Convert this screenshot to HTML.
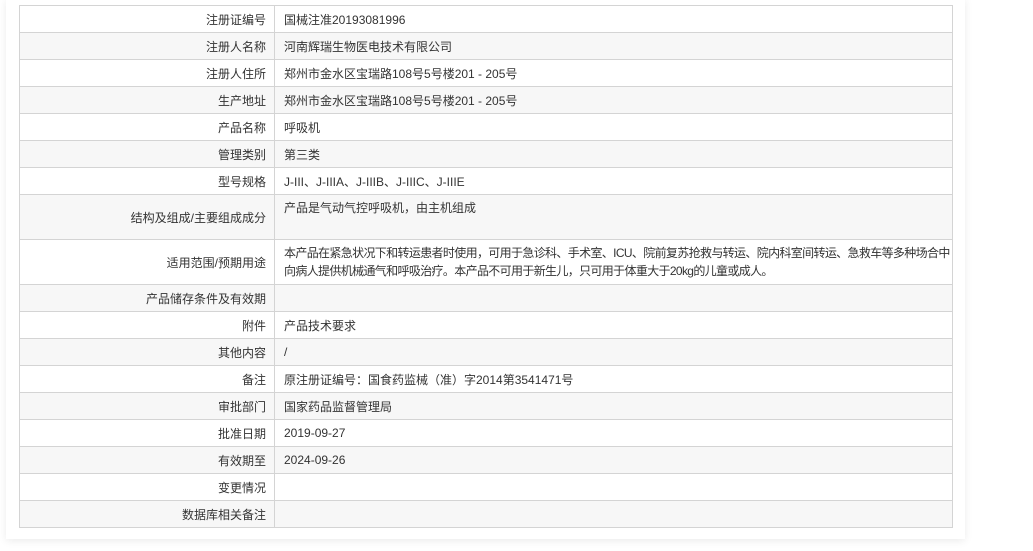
<!DOCTYPE html>
<html><head><meta charset="utf-8"><style>
html,body{margin:0;padding:0;background:#fff;width:1033px;height:551px;overflow:hidden}
.card{position:absolute;left:6px;top:-2px;width:959px;height:541px;background:#fff;box-shadow:0 2px 8px rgba(0,0,0,0.08)}
table{position:absolute;left:19px;top:5px;width:933px;table-layout:fixed;border-collapse:collapse;border:1px solid #ccc;font-family:"Liberation Sans","Noto Sans CJK SC",sans-serif;font-size:12px;color:#333}
td{border:1px solid #d4d4d4;height:27px;padding:0;box-sizing:border-box}
td.l{text-align:right;padding-right:8px;vertical-align:middle}
td.v{padding-left:9px;vertical-align:middle}
tr.tall td{height:45px}
tr.tall td.v{vertical-align:top;padding-top:4px;line-height:18px}
tr:nth-child(even) td{background:#f7f7f7}
</style></head><body>
<div class="card"></div>
<table>
<colgroup><col style="width:255px"><col style="width:678px"></colgroup>
<tr><td class="l">注册证编号</td><td class="v">国械注准20193081996</td></tr>
<tr><td class="l">注册人名称</td><td class="v">河南辉瑞生物医电技术有限公司</td></tr>
<tr><td class="l">注册人住所</td><td class="v">郑州市金水区宝瑞路108号5号楼201 - 205号</td></tr>
<tr><td class="l">生产地址</td><td class="v">郑州市金水区宝瑞路108号5号楼201 - 205号</td></tr>
<tr><td class="l">产品名称</td><td class="v">呼吸机</td></tr>
<tr><td class="l">管理类别</td><td class="v">第三类</td></tr>
<tr><td class="l">型号规格</td><td class="v">J-III、J-IIIA、J-IIIB、J-IIIC、J-IIIE</td></tr>
<tr class="tall"><td class="l">结构及组成/主要组成成分</td><td class="v">产品是气动气控呼吸机，由主机组成</td></tr>
<tr class="tall"><td class="l">适用范围/预期用途</td><td class="v" style="white-space:nowrap;letter-spacing:-0.65px;overflow:hidden">本产品在紧急状况下和转运患者时使用，可用于急诊科、手术室、ICU、院前复苏抢救与转运、院内科室间转运、急救车等多种场合中<br>向病人提供机械通气和呼吸治疗。本产品不可用于新生儿，只可用于体重大于20kg的儿童或成人。</td></tr>
<tr><td class="l">产品储存条件及有效期</td><td class="v"></td></tr>
<tr><td class="l">附件</td><td class="v">产品技术要求</td></tr>
<tr><td class="l">其他内容</td><td class="v">/</td></tr>
<tr><td class="l">备注</td><td class="v">原注册证编号：国食药监械（准）字2014第3541471号</td></tr>
<tr><td class="l">审批部门</td><td class="v">国家药品监督管理局</td></tr>
<tr><td class="l">批准日期</td><td class="v">2019-09-27</td></tr>
<tr><td class="l">有效期至</td><td class="v">2024-09-26</td></tr>
<tr><td class="l">变更情况</td><td class="v"></td></tr>
<tr><td class="l">数据库相关备注</td><td class="v"></td></tr>
</table>
</body></html>
